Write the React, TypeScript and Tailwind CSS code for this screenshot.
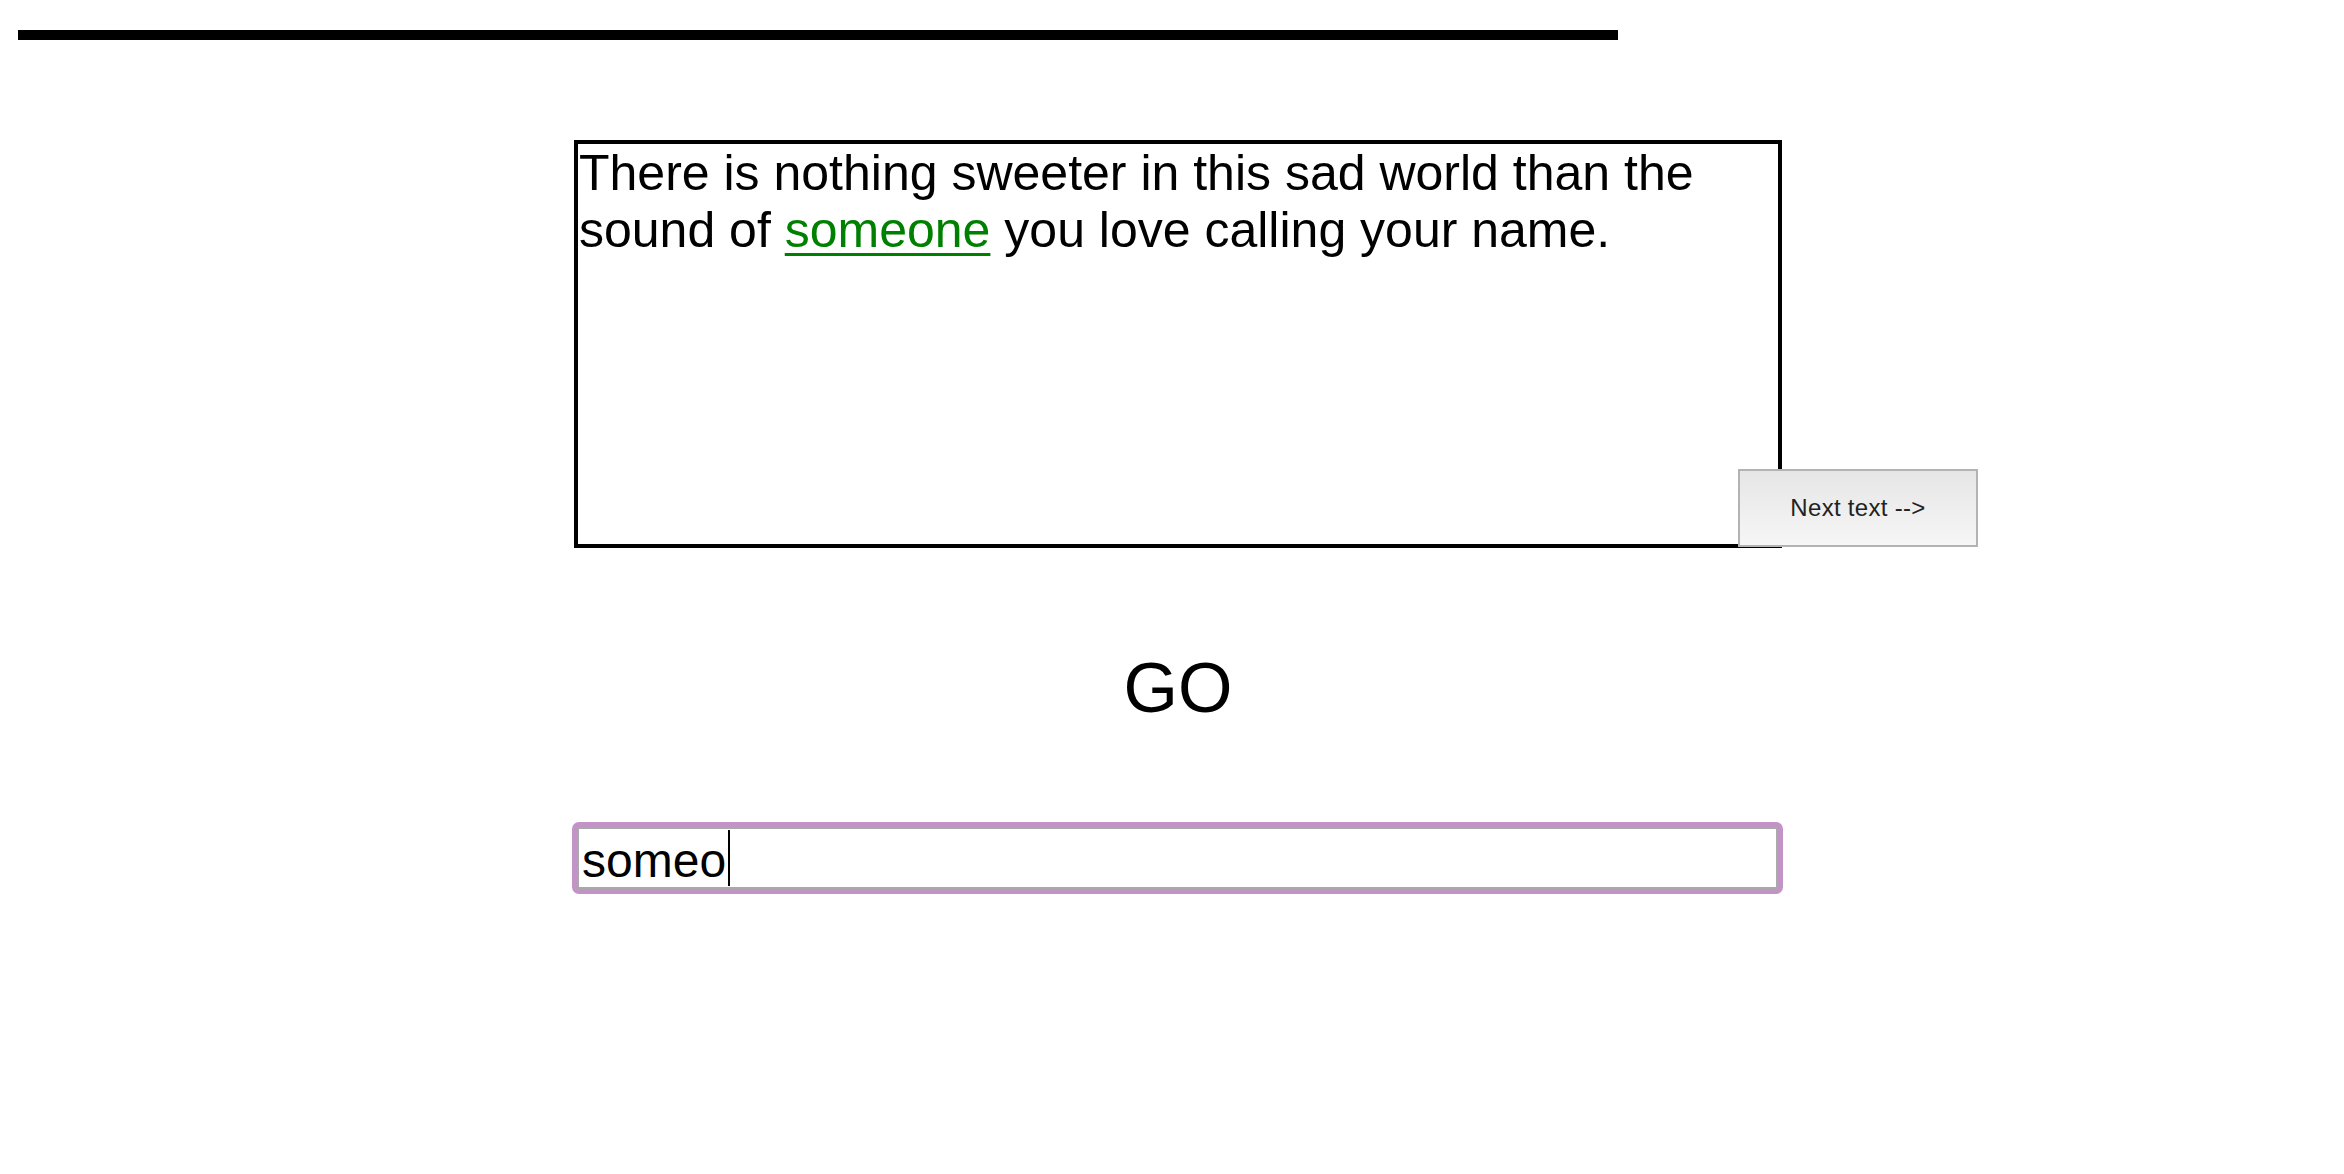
import React from "react";

export default function App() {
  return (
    <div className="min-h-screen bg-white text-black" style={{ fontFamily: '"Liberation Sans", Arial, Helvetica, sans-serif' }}>
      <div className="ml-[18px] pt-[30px]">
        <div className="h-[10px] w-[1600px] bg-black" />
      </div>
      <div className="ml-[574px] w-[1208px] mt-[100px]">
        <div className="relative">
          <div className="h-[408px] border-[4px] border-black pl-[1px] pt-[1px] text-[50px] leading-[57px]">
            There is nothing sweeter in this sad world than the sound of{" "}
            <span className="text-[#008000] underline decoration-[3px] underline-offset-[6px]">someone</span> you love calling your name.
          </div>
          <button className="absolute left-[1164px] top-[329px] w-[240px] h-[78px] border-2 border-[#b3b3b3] bg-linear-to-b from-[#e6e6e6] to-[#f6f6f6] text-[24px] tracking-[0.3px] text-[#222]">
            Next text --&gt;
          </button>
        </div>
        <div className="mt-[100px] h-[80px] text-center text-[70px] leading-[80px]">GO</div>
        <div className="-ml-[2px] mt-[94px] h-[72px] w-[1211px] rounded-[7px] border-[5px] border-[#c194c5]">
          <div className="flex h-full items-center border-2 border-[#a9a9a9] pl-[3px] text-[48px]">
            <span className="pt-[5px] leading-[52px]">someo</span>
            <span className="ml-[2px] h-[56px] w-[2px] bg-black" />
          </div>
        </div>
      </div>
    </div>
  );
}
